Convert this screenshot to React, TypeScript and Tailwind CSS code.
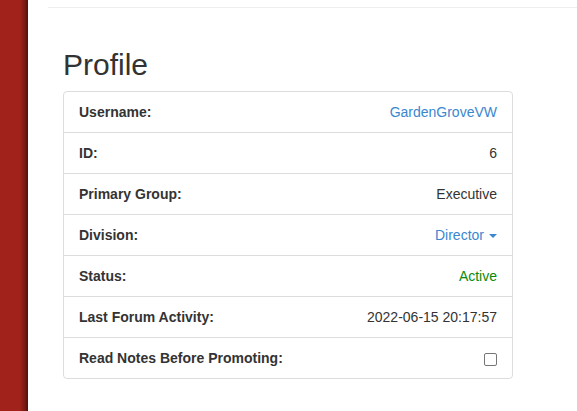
import React from "react";

type Row = { label: string; value: React.ReactNode };

const rows: Row[] = [
  { label: "Username:", value: <a className="text-[#3a87d0]">GardenGroveVW</a> },
  { label: "ID:", value: <span>6</span> },
  { label: "Primary Group:", value: <span>Executive</span> },
  {
    label: "Division:",
    value: (
      <span className="inline-flex items-center gap-[5px] text-[#3a87d0]">
        Director
        <span className="inline-block w-0 h-0 border-l-[4px] border-r-[4px] border-t-[4px] border-l-transparent border-r-transparent border-t-[#3a87d0] mt-[1px]" />
      </span>
    ),
  },
  { label: "Status:", value: <span className="text-[#0a8a0a]">Active</span> },
  { label: "Last Forum Activity:", value: <span>2022-06-15 20:17:57</span> },
  {
    label: "Read Notes Before Promoting:",
    value: (
      <span className="inline-block w-[13px] h-[13px] border border-[#767676] rounded-[2px] bg-white mt-[2px]" />
    ),
  },
];

export default function App() {
  return (
    <div
      className="flex min-h-screen bg-white text-[14px] text-[#333]"
      style={{ fontFamily: '"Liberation Sans", Arial, Helvetica, sans-serif' }}
    >
      <aside className="w-[28px] shrink-0 bg-[linear-gradient(to_right,#a0221b_0%,#a0221b_70%,#7a1912_88%,#4e0f0b_100%)]" />
      <main className="flex-1 pl-[20px]">
        <div className="h-[8px] border-b border-[#eeeeee]" />
        <div className="px-[15px] pt-[40px]">
          <h2 className="text-[30px] leading-[33px] font-medium mb-[10px]">Profile</h2>
          <div className="w-[450px] border border-[#dddddd] rounded-[4px]">
            {rows.map((r, i) => (
              <div
                key={r.label}
                className={`flex items-center justify-between px-[15px] py-[10px] leading-[20px] ${
                  i > 0 ? "border-t border-[#dddddd]" : ""
                }`}
              >
                <span className="font-bold">{r.label}</span>
                {r.value}
              </div>
            ))}
          </div>
        </div>
      </main>
    </div>
  );
}
